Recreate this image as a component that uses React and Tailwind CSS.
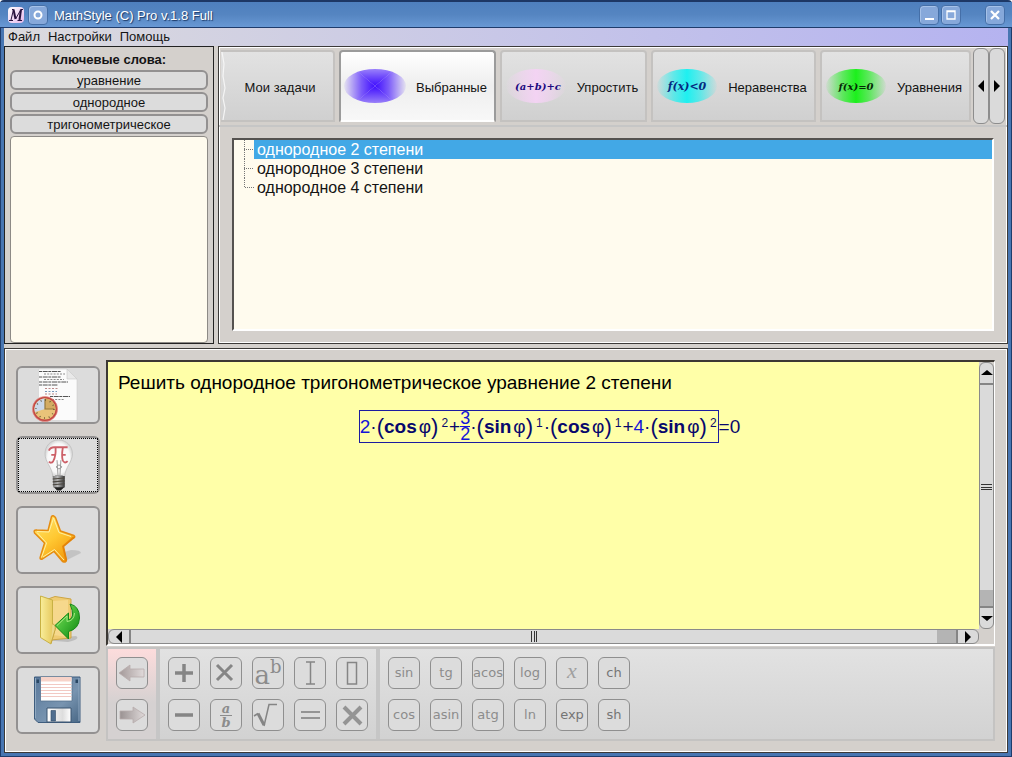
import React from "react";

const keywords = ["уравнение", "однородное", "тригонометрическое"];
const tasks = ["однородное 2 степени", "однородное 3 степени", "однородное 4 степени"];

const panel = "border border-[#3c3a38] shadow-[inset_1px_1px_0_#fff,inset_-1px_-1px_0_#fff]";
const sideButton =
  "flex w-[84px] items-center justify-center rounded-md border-2 border-[#939191] bg-[#dcdcdc]";
const keyButton =
  "flex size-8 items-center justify-center rounded-md border border-[#8f8f8f] bg-[#dcdcdc] text-[#8c8c8c] font-['DejaVu_Sans',sans-serif] text-[13px] leading-4";

function Blob({ kind, text }) {
  const colors = { blue: "#3f0dff", pink: "#f3d3f3", cyan: "#1ef0f0", green: "#1cf01c" };
  const ink = { blue: "#000080", pink: "#1c0a80", cyan: "#062a80", green: "#062806" };
  const c = colors[kind];
  return (
    <svg viewBox="0 0 64 64" className="h-16 w-16 shrink-0" aria-hidden="true">
      <defs>
        <linearGradient id={"h" + kind} x1="0" x2="1" y1="0" y2="0">
          <stop offset="0" stopColor={c} stopOpacity="0.05" />
          <stop offset="0.28" stopColor={c} stopOpacity="0.65" />
          <stop offset="0.5" stopColor={c} />
          <stop offset="0.72" stopColor={c} stopOpacity="0.65" />
          <stop offset="1" stopColor={c} stopOpacity="0.05" />
        </linearGradient>
        <linearGradient id={"v" + kind} x1="0" x2="0" y1="0" y2="1">
          <stop offset="0" stopColor={c} stopOpacity="0.5" />
          <stop offset="0.5" stopColor={c} />
          <stop offset="1" stopColor={c} stopOpacity="0.5" />
        </linearGradient>
        <clipPath id={"c" + kind}>
          <path d="M0 5L32 32L0 59ZM64 5L32 32L64 59Z" />
        </clipPath>
        <clipPath id={"d" + kind}>
          <path d="M0 5L32 32L64 5ZM0 59L32 32L64 59Z" />
        </clipPath>
      </defs>
      {kind === "blue" ? (
        <>
          <g clipPath={"url(#c" + kind + ")"}>
            <ellipse cx="32" cy="32" rx="31" ry="17" fill={"url(#h" + kind + ")"} />
          </g>
          <g clipPath={"url(#d" + kind + ")"}>
            <ellipse cx="32" cy="32" rx="31" ry="17" fill={"url(#v" + kind + ")"} />
          </g>
        </>
      ) : (
        <ellipse cx="32" cy="32" rx="30" ry="17" fill={"url(#h" + kind + ")"} />
      )}
      {text && (
        <text
          x={kind === "pink" ? 34 : 32}
          y="36"
          textAnchor="middle"
          fontFamily="DejaVu Serif"
          fontSize={kind === "cyan" ? 11 : 10}
          fontWeight="bold"
          fontStyle="italic"
          fill={ink[kind]}
        >
          {text}
        </text>
      )}
    </svg>
  );
}

function Tab({ label, width, kind, text, selected }) {
  return (
    <button
      role="tab"
      aria-selected={!!selected}
      className={
        "flex h-[72px] shrink-0 items-center rounded-t border-2 pl-0.5 text-[13px] " +
        width +
        (selected
          ? " border-[#9b9b9b] border-b-transparent bg-linear-to-b from-white via-[#eeeeee] to-[#f8f8f8]"
          : " border-[#c4c2c0] bg-linear-to-b from-[#e2e2e2] to-[#d0d0d0]")
      }
    >
      <span className="flex">
        <Blob kind={kind} text={text} />
      </span>
      <span className="flex-1 pt-1 pl-0.5 text-center">{label}</span>
    </button>
  );
}

function Tri({ dir }) {
  const d = {
    left: "M9 0L3 6L9 12Z",
    right: "M3 0L9 6L3 12Z",
    up: "M0 8L6 3L12 8Z",
    down: "M0 4L6 9L12 4Z",
  }[dir];
  return (
    <svg viewBox="0 0 12 12" className="size-3" aria-hidden="true">
      <path d={d} fill="#000" />
    </svg>
  );
}

function ClockSheet() {
  return (
    <svg viewBox="0 0 54 54" className="size-[54px]" aria-hidden="true">
      <path d="M7.500 1H36L46 11V52.500H7.500Z" fill="#fbfbfb" stroke="#cfcfcf" strokeWidth=".6" />
      <path d="M36 1V11H46Z" fill="#e9e9e9" stroke="#c8c8c8" strokeWidth=".6" />
      <g stroke="#555" strokeWidth="1" strokeDasharray="3 .7 5 .6">
        <path d="M8 3.500H30M8 9H30M8 14H37M8 17H27M19 28.500H39" />
      </g>
      <g stroke="#888" strokeWidth="1" strokeDasharray="2 1.2">
        <path d="M13 6H34M13 11.500H33M21 31.500H33" />
      </g>
      <path d="M14 20.500H28M14 26H26" strokeWidth="1" strokeDasharray="2 1.500" stroke="#b88" />
      <path d="M14 23.500H26" stroke="#79b" strokeDasharray="2 1.500" />
      <circle cx="14" cy="41" r="11.600" fill="#e9c379" stroke="#c34a45" strokeWidth="2" />
      <path d="M14 41V30.500A10.500 10.500 0 0 0 4 44Z" fill="#ccd9ea" />
      <path d="M14 41V30.500A10.500 10.500 0 0 1 24.500 41Z" fill="#d3ac62" />
      <path d="M14 31V41H23" fill="none" stroke="#96783b" strokeWidth="1.200" />
      <circle cx="14" cy="41" r="9" fill="none" stroke="#4d4126" strokeWidth="1.500" strokeDasharray=".8 3.910" />
      <circle cx="14" cy="41" r="12.600" fill="none" stroke="#e79089" strokeWidth=".6" />
    </svg>
  );
}

function Bulb() {
  return (
    <svg viewBox="0 0 54 54" className="size-[52px]" aria-hidden="true">
      <defs>
        <radialGradient id="glass">
          <stop offset="0" stopColor="#fff" />
          <stop offset=".8" stopColor="#f8f8f8" />
          <stop offset="1" stopColor="#d8d8d8" />
        </radialGradient>
        <linearGradient id="screw">
          <stop offset="0" stopColor="#777" />
          <stop offset=".4" stopColor="#b8b8b8" />
          <stop offset="1" stopColor="#333" />
        </linearGradient>
      </defs>
      <path d="M27.500 1C19 1 13.500 7.500 13.500 15.500C13.500 24 21 29 21.500 39H34C34.500 29 42 24 42 15.500C42 7.500 36 1 27.500 1Z" fill="url(#glass)" stroke="#bdbdbd" strokeWidth=".8" />
      <path d="M17.500 12Q19 8.500 23 8.500H37" fill="none" stroke="#cd6068" strokeWidth="2" />
      <path d="M24.500 9Q25 18 22 23Q20 26 17.500 23.500M32 9Q30.500 18 32 22.500Q34 26 37 23M20 16.500H25M30.500 16.500H35" fill="none" stroke="#cd6068" strokeWidth="1.900" />
      <path d="M26 22L27 38M30 22L29 38M25 29Q28 25 31 29Q28 33 25 29M24 38H32" fill="none" stroke="#999" strokeWidth="1" />
      <path d="M21.500 38.500H34V50L31 52H25L22 50Z" fill="url(#screw)" />
      <path d="M21.500 41.500L34 40.500M21.500 44.500L34 43.500M21.500 47.500L34 46.500" stroke="#4b4740" strokeWidth="1.200" />
      <path d="M23 50H33L30 53.500H26Z" fill="#222" />
    </svg>
  );
}

function Star() {
  return (
    <svg viewBox="0 0 54 54" className="size-[54px]" aria-hidden="true">
      <defs>
        <linearGradient id="gold" x1="0" y1="0" x2=".7" y2="1">
          <stop offset="0" stopColor="#ffe56d" />
          <stop offset=".55" stopColor="#ffc832" />
          <stop offset="1" stopColor="#f39a0c" />
        </linearGradient>
      </defs>
      <path d="M34 48L50 40Q50 37 40 37L30 40Z" fill="#8c8c8c" opacity=".3" />
      <path d="M20.500 3.500Q22 1.500 24.500 4.500L29.500 18L43 22.500Q45 24 42 25.500L32.500 33.500L35.500 47Q35.500 50 31.500 48.500L23 38.500L11.500 46Q8 47 9.500 43L13.500 30L3.500 20Q2 16.500 6 17L17 17.500Z" fill="url(#gold)" stroke="#e58b10" strokeWidth="1.400" strokeLinejoin="round" />
      <path d="M22.500 5L18 19L6 18.500M22.500 5L28 19.500L40 23.500M10.500 44.500L15.500 30L6 19.500M33 47L23.500 36.500L12 44" fill="none" stroke="#fff0a4" strokeWidth="1" />
      <path d="M34.500 48.500L31 33L42 23.500Q45 24 42 26L32.500 33.500L36 47Z" fill="#e17d05" opacity=".75" />
    </svg>
  );
}

function FolderBack() {
  return (
    <svg viewBox="0 0 54 54" className="size-[54px]" aria-hidden="true">
      <defs>
        <linearGradient id="fold" x1="0" x2="1">
          <stop offset="0" stopColor="#f9ee9a" />
          <stop offset="1" stopColor="#e2c152" />
        </linearGradient>
        <linearGradient id="green" x1="0" x2="1" y1="0" y2="1">
          <stop offset="0" stopColor="#8fe361" />
          <stop offset=".5" stopColor="#43b936" />
          <stop offset="1" stopColor="#0c810d" />
        </linearGradient>
      </defs>
      <path d="M11 47L37 49Q50 46 45 43L22 45Z" fill="#777" opacity=".3" />
      <path d="M17 6L24 3.500L40 6V45L20 47Z" fill="#efcb72" stroke="#cda544" />
      <path d="M22 8L37 7V44L22 42Z" fill="#f6d88c" />
      <path d="M9.500 3L21.500 7V31L24.500 35L20 51L9.500 44.500Z" fill="url(#fold)" stroke="#c8b144" />
      <path d="M21.500 31Q25 31 24 37L20 50" fill="#ecd98b" stroke="#c5a13b" strokeWidth=".8" />
      <path d="M39 11Q48.500 13 48.500 25Q48 36 37.500 38.500V46L24 32.500L37.500 20V27Q45 25 39 11Z" fill="url(#green)" stroke="#168817" strokeWidth="1" />
      <path d="M26 32.500L36 23V28.500Q43 28 43.500 20" fill="none" stroke="#a5ec82" strokeWidth="1" />
    </svg>
  );
}

function Floppy() {
  return (
    <svg viewBox="0 0 54 54" className="size-[54px]" aria-hidden="true">
      <defs>
        <linearGradient id="disk" x1="0" x2="1" y1="0" y2="1">
          <stop offset="0" stopColor="#58779a" />
          <stop offset=".6" stopColor="#7894b0" />
          <stop offset="1" stopColor="#486785" />
        </linearGradient>
        <linearGradient id="shutter" x1="0" x2="1">
          <stop offset="0" stopColor="#fff" />
          <stop offset=".65" stopColor="#ddd" />
          <stop offset="1" stopColor="#fff" />
        </linearGradient>
      </defs>
      <path d="M3.500 4H49V49.500H7L3.500 46Z" fill="url(#disk)" stroke="#3e5d7e" strokeWidth="1" />
      <path d="M4.500 5V45M48 5V48" fill="none" stroke="#90a9c1" />
      <path d="M9.500 4H41V28H9.500Z" fill="#fff" stroke="#56718e" strokeWidth=".8" />
      <path d="M10 4H40.500V8.500H10Z" fill="#f7d3c9" />
      <path d="M10 11.500H40.500M10 14.500H40.500M10 17.500H40.500M10 20.500H40.500M10 23.500H40.500" stroke="#f2c9c3" strokeWidth="1" />
      <path d="M5.500 6.500H8V10H5.500ZM44.500 6.500H47V10H44.500Z" fill="#294764" />
      <path d="M16 35H40V49H16Z" fill="url(#shutter)" stroke="#3b5571" />
      <path d="M20 37.500H24.500V48H20Z" fill="#506e8f" stroke="#304a66" strokeWidth=".6" />
    </svg>
  );
}

const sideItems = [
  ["Список задач", ClockSheet, "h-[58px]"],
  ["Подсказка", Bulb, "h-[58px]"],
  ["Избранное", Star, "h-[68px]"],
  ["Открыть", FolderBack, "h-[68px]"],
  ["Сохранить", Floppy, "h-[68px]"],
];

function Glyph({ children, width = 3.5, color = "#858585" }) {
  return (
    <svg viewBox="0 0 30 30" className="size-[30px]" fill="none" stroke={color} strokeWidth={width} aria-hidden="true">
      {children}
    </svg>
  );
}

function HistoryArrow({ flip }) {
  const id = flip ? "fwd" : "back";
  return (
    <svg viewBox="0 0 30 30" className="size-[30px]" aria-hidden="true">
      <defs>
        <linearGradient id={id}>
          <stop offset="0" stopColor={flip ? "#9a9292" : "#a39898"} />
          <stop offset="1" stopColor="#e0dada" />
        </linearGradient>
      </defs>
      <path
        d={flip ? "M3 11H16V7L28 15L16 23V19H3Z" : "M2 15L13 7V11H27V19H13V23Z"}
        fill={"url(#" + id + ")"}
        stroke="#b7acac"
        strokeWidth=".8"
      />
    </svg>
  );
}

const fnKeys = [
  ["sin", "tg", "acos", "log", "x", "ch"],
  ["cos", "asin", "atg", "ln", "exp", "sh"],
];

const winButton =
  "flex size-5 items-center justify-center rounded-sm border border-[#456fa8] bg-[#86a8da] shadow-[inset_1px_1px_0_#a5c1e8]";

function Term({ fn, power }) {
  return (
    <span className="flex items-center text-[#08086c]">
      <span className="text-[22px]">(</span>
      <b className="pr-0.5">{fn}</b>φ
      <span className="text-[22px]">)</span>
      <sup className="relative -top-1 pr-px pl-[3px] text-[12px] leading-3">{power}</sup>
    </span>
  );
}

export default function App() {
  return (
    <div className="flex min-h-screen flex-col rounded-t border-t-2 border-[#1d3765] bg-[#4f7fbb] font-['Liberation_Sans',Arial,sans-serif] text-[13px] leading-4 text-[#141414]">
      <header className="flex h-[25px] shrink-0 items-center bg-linear-to-b from-[#4e7fbe] via-[#5585c1] to-[#6898d4] px-2 pr-[7px]">
        <svg viewBox="0 0 16 16" className="size-4 rounded-sm bg-linear-to-br from-[#fff] to-[#e5b8ea]" aria-hidden="true">
          <path d="M1 13.500H5M3 13L5.500 2.500H4" fill="none" stroke="#28123d" strokeWidth="1" />
          <path d="M5.500 2.500L7.500 12" fill="none" stroke="#28123d" strokeWidth="2" />
          <path d="M7.500 12L13 2.500H15M9.500 13.500H14" fill="none" stroke="#28123d" strokeWidth="1" />
          <path d="M13 2.500L11.500 13" fill="none" stroke="#28123d" strokeWidth="2" />
        </svg>
        <button aria-label="Меню окна" className={winButton + " ml-1"}>
          <svg viewBox="0 0 10 10" className="size-2.5"><circle cx="5" cy="5" r="3.500" fill="none" stroke="#fff" strokeWidth="2" /></svg>
        </button>
        <h1 className="ml-1.5 flex-1 pt-0.5 text-[13px] text-white [text-shadow:1px_1px_1px_#1b3866]">MathStyle (C) Pro v.1.8 Full</h1>
        <button aria-label="Свернуть" className={winButton}>
          <svg viewBox="0 0 12 12" className="size-3"><path d="M2 10H11" stroke="#fff" strokeWidth="2" /></svg>
        </button>
        <button aria-label="Развернуть" className={winButton + " ml-0.5 mr-6"}>
          <svg viewBox="0 0 12 12" className="size-3"><path d="M2 2H10V10H2ZM2 2.500H10" fill="none" stroke="#fff" strokeWidth="1.300" /></svg>
        </button>
        <button aria-label="Закрыть" className={winButton}>
          <svg viewBox="0 0 12 12" className="size-3"><path d="M2 2L10 10M10 2L2 10" stroke="#fff" strokeWidth="2.200" /></svg>
        </button>
      </header>

      <div className="flex flex-1 flex-col border-x-4 border-b-4 border-[#4876b2] bg-[#d4d0cc] outline-1 -outline-offset-1 outline-[#1f3c6c]">
        <nav className="flex h-[19px] shrink-0 items-center gap-2 bg-linear-to-r from-[#dbdadd] to-[#b5b3f0] px-1">
          <button>Файл</button>
          <button>Настройки</button>
          <button>Помощь</button>
        </nav>

        <div className="flex h-[298px] shrink-0 gap-1">
          <section className="flex w-[210px] shrink-0 flex-col gap-0.5 border border-[#222] px-[5px] pt-[5px]">
            <h2 className="text-center font-bold">Ключевые слова:</h2>
            {keywords.map((k) => (
              <button key={k} className="h-5 shrink-0 rounded-md border-2 border-[#939191] bg-[#dcdcdc] pt-px leading-4">
                {k}
              </button>
            ))}
            <div className="flex-1 rounded border border-[#8d8a86] bg-[#fffbee]" />
          </section>

          <section className={"flex min-w-0 flex-1 flex-col " + panel}>
            <div className="flex h-[80px] items-center border-b-2 border-[#c6c6c6] px-0.5">
              <div role="tablist" className="flex min-w-0 flex-1 items-center gap-1 overflow-hidden">
                <button role="tab" aria-selected="false" className="flex h-[72px] w-[114px] shrink-0 items-center rounded-tr border-2 border-l-0 border-[#c4c2c0] bg-linear-to-b from-[#e2e2e2] to-[#d0d0d0] text-[13px]">
                  <svg viewBox="0 0 6 68" className="h-[68px] w-1.5 shrink-0" aria-hidden="true">
                    <path d="M1 0L3 12L2 24L4 36L2 46L4 56L2 68" fill="none" stroke="#f5f5f5" strokeWidth="1.200" />
                  </svg>
                  <span className="flex-1 pt-1 text-center">Мои задачи</span>
                </button>
                <Tab selected kind="blue" label="Выбранные" width="w-[157px]" />
                <Tab kind="pink" text="(a+b)+c" label="Упростить" width="w-[147px]" />
                <Tab kind="cyan" text="f(x)<0" label="Неравенства" width="w-[165px]" />
                <Tab kind="green" text="f(x)=0" label="Уравнения" width="w-[151px]" />
              </div>
              <button aria-label="Назад" className="flex h-[76px] w-4 items-center justify-center rounded-md border border-[#8d8d8d] bg-[#dadada]"><Tri dir="left" /></button>
              <button aria-label="Вперёд" className="flex h-[76px] w-4 items-center justify-center rounded-md border border-[#8d8d8d] bg-[#dadada]"><Tri dir="right" /></button>
            </div>
            <ul role="tree" className="mx-[13px] mt-[11px] mb-3 flex-1 border-2 border-[#55524f] border-r-white border-b-white bg-[#fffbee] pl-2.5 text-[16px] leading-[19px]">
              {tasks.map((t, i) => (
                <li key={t} role="treeitem" aria-selected={i === 0} className="flex h-[19px]">
                  <svg viewBox="0 0 10 19" className="h-[19px] w-2.5 shrink-0" aria-hidden="true">
                    <path d={i === 2 ? "M.5 0V9.500H10" : "M.5 0V19M0 9.500H10"} fill="none" stroke="#777" strokeDasharray="1 1" />
                  </svg>
                  <span className={"flex-1 pl-[3px] " + (i === 0 ? "bg-[#42a8e6] text-white" : "")}>{t}</span>
                </li>
              ))}
            </ul>
          </section>
        </div>

        <main className={"mt-1 flex flex-1 " + panel}>
          <div className="flex flex-col gap-3 pt-[17px] pl-[11px]">
            {sideItems.map(([label, Icon, height], i) => (
              <button key={label} aria-label={label} className={sideButton + " " + height}>
                {i === 1 ? (
                  <span className="flex w-full justify-center border border-dotted border-black"><Icon /></span>
                ) : (
                  <Icon />
                )}
              </button>
            ))}
          </div>

          <div className="ml-1.5 mr-3 mt-[11px] mb-[11px] flex min-w-0 flex-1 flex-col">
            <div className="flex flex-1 flex-col border-2 border-r border-[#3c3833] border-r-white border-b-white bg-[#d4d0cc]">
              <div className="flex flex-1">
                <article className="flex-1 bg-[#ffffa8] px-2.5 pt-[9px] text-[19px] leading-6 text-black">
                  <p>Решить однородное тригонометрическое уравнение 2 степени</p>
                  <div className="mt-[15px] ml-3 flex items-center justify-center">
                    <div className="flex h-[33px] items-center border border-[#1c1ca0] text-[#08086c]">
                      <span className="text-[#1414d8]">2</span>·<Term fn="cos" power="2" />+
                      <span className="flex flex-col text-[18px] text-[#1414d8]">
                        <span className="border-b border-[#1414d8] leading-[15px]">3</span>
                        <span className="leading-[15px]">2</span>
                      </span>
                      ·<Term fn="sin" power="1" />·<Term fn="cos" power="1" />+<span className="text-[#1414d8]">4</span>·<Term fn="sin" power="2" />
                    </div>
                    <span className="text-[#08086c]">=0</span>
                  </div>
                </article>
                <div className="flex w-[15px] flex-col rounded-md border border-[#8a8a8a] bg-[#dadada]">
                  <button aria-label="Прокрутить вверх" className="flex h-[22px] items-center justify-center border-b-2 border-[#858585]"><Tri dir="up" /></button>
                  <div className="flex flex-1 items-center justify-center">
                    <svg viewBox="0 0 11 7" className="h-[7px] w-[11px]" aria-hidden="true"><path d="M0 .5H11M0 3.500H11M0 5.500H11" stroke="#333" /></svg>
                  </div>
                  <div className="h-4 bg-[#b4b4b4]" />
                  <button aria-label="Прокрутить вниз" className="flex h-[22px] items-center justify-center border-t-2 border-[#858585]"><Tri dir="down" /></button>
                </div>
              </div>
              <div className="mr-[15px] flex h-[15px] rounded-md border border-[#8a8a8a] bg-[#dadada]">
                <button aria-label="Прокрутить влево" className="flex w-[22px] items-center justify-center border-r-2 border-[#858585]"><Tri dir="left" /></button>
                <div className="flex flex-1 items-center justify-center">
                  <svg viewBox="0 0 7 11" className="h-[11px] w-[7px]" aria-hidden="true"><path d="M.5 0V11M3.500 0V11M5.500 0V11" stroke="#333" /></svg>
                </div>
                <div className="w-[19px] bg-[#b4b4b4]" />
                <button aria-label="Прокрутить вправо" className="flex w-[22px] items-center justify-center border-l-2 border-[#858585]"><Tri dir="right" /></button>
              </div>
            </div>

            <div className="mt-px flex h-[94px] border-2 border-[#c4c3c2] bg-linear-to-b from-[#e2e2e2] to-[#d2d2d2]">
              <div className="flex flex-col gap-2.5 border-r-4 border-[#c6c6c6] bg-linear-to-b from-[#fddcdc] to-[#d5d1d1] to-60% px-2 pt-2">
                <button aria-label="Отменить" className={keyButton}><HistoryArrow /></button>
                <button aria-label="Повторить" className={keyButton}><HistoryArrow flip /></button>
              </div>
              <div className="grid grid-cols-5 content-start gap-2.5 border-r-4 border-[#c6c6c6] px-2 pt-2">
                <button aria-label="Плюс" className={keyButton}><Glyph><path d="M6 15H24M15 6V24" /></Glyph></button>
                <button aria-label="Умножить" className={keyButton}><Glyph width={3}><path d="M6 7L21 22M21 7L6 22" /></Glyph></button>
                <button aria-label="Степень" className={keyButton + " overflow-hidden font-['DejaVu_Serif',serif]"}>
                  <span className="pt-1 text-[26px] leading-7">a</span><span className="mb-3 text-[18px] leading-4">b</span>
                </button>
                <button aria-label="Курсор" className={keyButton}><Glyph width={1.5}><path d="M11 4H20M11 26H20M15.500 4V26" /></Glyph></button>
                <button aria-label="Поле" className={keyButton}><Glyph width={1.500}><path d="M10.500 4.500H19.500V26H10.500Z" /></Glyph></button>
                <button aria-label="Минус" className={keyButton}><Glyph><path d="M6 15H24" /></Glyph></button>
                <button aria-label="Дробь" className={keyButton + " flex-col font-['DejaVu_Serif',serif] text-[13px] font-bold italic leading-[13px]"}>
                  <span className="border-b border-[#8c8c8c] px-0.5">a</span><span>b</span>
                </button>
                <button aria-label="Корень" className={keyButton}>
                  <Glyph width={1.500}><path d="M1 16L5 13.500M11 26L16 4.500H24" /><path d="M5 13.500L11 25" strokeWidth="3" /></Glyph>
                </button>
                <button aria-label="Равно" className={keyButton}><Glyph width={2} color="#949494"><path d="M6 12H25M6 18H25" /></Glyph></button>
                <button aria-label="Удалить" className={keyButton}><Glyph width={4} color="#949494"><path d="M7 7L24 24M24 7L7 24" /></Glyph></button>
              </div>
              <div className="flex flex-col gap-2.5 px-2 pt-2">
                {fnKeys.map((row) => (
                  <div key={row[0]} className="flex gap-2.5">
                    {row.map((f) =>
                      f === "x" ? (
                        <button key={f} className={keyButton}>
                          <i className="pb-1 font-['Liberation_Serif',serif] text-[22px] leading-5 text-[#a0a0a0]">x</i>
                        </button>
                      ) : (
                        <button key={f} className={keyButton + (["ch", "sh", "exp"].includes(f) ? " text-[#757575]" : "")}>{f}</button>
                      )
                    )}
                  </div>
                ))}
              </div>
            </div>
          </div>
        </main>
      </div>
    </div>
  );
}
